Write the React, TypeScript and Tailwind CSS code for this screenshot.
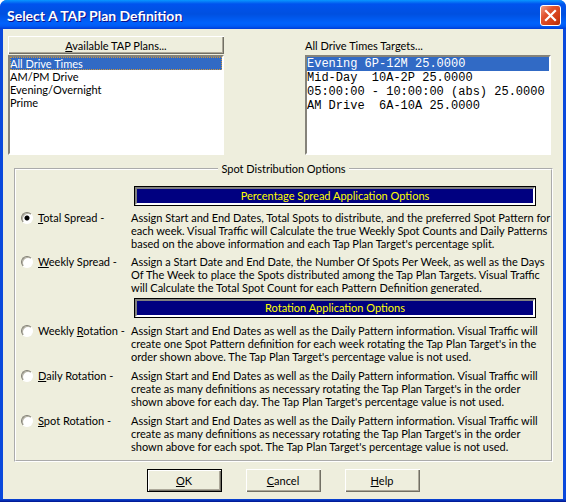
import { useState, type ReactNode } from "react";

const PLANS = ["All Drive Times", "AM/PM Drive", "Evening/Overnight", "Prime"];

const TARGETS = [
  "Evening 6P-12M 25.0000",
  "Mid-Day\u00a0 10A-2P 25.0000",
  "05:00:00 - 10:00:00 (abs) 25.0000",
  "AM Drive\u00a0 6A-10A 25.0000",
];

type Option = { id: string; before: string; hotkey: string; after: string; lines: string[] };

const SPREAD_OPTIONS: Option[] = [
  {
    id: "total-spread",
    before: "",
    hotkey: "T",
    after: "otal Spread -",
    lines: [
      "Assign Start and End Dates, Total Spots to distribute, and the preferred Spot Pattern for",
      "each week. Visual Traffic will Calculate the true Weekly Spot Counts and Daily Patterns",
      "based on the above information and each Tap Plan Target's percentage split.",
    ],
  },
  {
    id: "weekly-spread",
    before: "",
    hotkey: "W",
    after: "eekly Spread -",
    lines: [
      "Assign a Start Date and End Date, the Number Of Spots Per Week, as well as the Days",
      "Of The Week to place the Spots distributed among the Tap Plan Targets. Visual Traffic",
      "will Calculate the Total Spot Count for each Pattern Definition generated.",
    ],
  },
];

const ROTATION_OPTIONS: Option[] = [
  {
    id: "weekly-rotation",
    before: "Weekly ",
    hotkey: "R",
    after: "otation -",
    lines: [
      "Assign Start and End Dates as well as the Daily Pattern information. Visual Traffic will",
      "create one Spot Pattern definition for each week rotating the Tap Plan Target's in the",
      "order shown above. The Tap Plan Target's percentage value is not used.",
    ],
  },
  {
    id: "daily-rotation",
    before: "",
    hotkey: "D",
    after: "aily Rotation -",
    lines: [
      "Assign Start and End Dates as well as the Daily Pattern information. Visual Traffic will",
      "create as many definitions as necessary rotating the Tap Plan Target's in the order",
      "shown above for each day. The Tap Plan Target's percentage value is not used.",
    ],
  },
  {
    id: "spot-rotation",
    before: "",
    hotkey: "S",
    after: "pot Rotation -",
    lines: [
      "Assign Start and End Dates as well as the Daily Pattern information. Visual Traffic will",
      "create as many definitions as necessary rotating the Tap Plan Target's in the order",
      "shown above for each spot. The Tap Plan Target's percentage value is not used.",
    ],
  },
];

const LIST_BOX =
  "block h-[100px] w-full appearance-none overflow-hidden rounded-none border-2 border-t-[#85837a] border-l-[#85837a] border-r-white border-b-white bg-white p-0 text-black outline-none";

const LIST_ITEM =
  "block p-0 checked:bg-[linear-gradient(#316ac5,#316ac5)] checked:[-webkit-text-fill-color:#fff]";

function Banner({ children }: { children: ReactNode }) {
  return (
    <h2 className="mr-[15px] ml-[118px] border border-black">
      <span className="block border-2 border-t-[#808080] border-r-white border-b-white border-l-[#808080] bg-[#000080] text-center leading-[14px] text-[#ffff00]">
        {children}
      </span>
    </h2>
  );
}

function OptionRow({
  option,
  checked,
  onSelect,
}: {
  option: Option;
  checked: boolean;
  onSelect: (id: string) => void;
}) {
  return (
    <div className="flex items-start">
      <div className="flex w-[115px] shrink-0 items-center gap-[5px] pl-[5px]">
        <input
          id={option.id}
          type="radio"
          name="distribution"
          checked={checked}
          onChange={() => onSelect(option.id)}
          aria-describedby={`${option.id}-text`}
          className="size-3 shrink-0 appearance-none rounded-full border border-t-[#807e73] border-r-white border-b-white border-l-[#807e73] bg-white shadow-[inset_1px_1px_0_#b5b3a5] checked:bg-[radial-gradient(circle,#000_2px,transparent_3px)]"
        />
        <label htmlFor={option.id} className="whitespace-nowrap">
          {option.before}
          <u>{option.hotkey}</u>
          {option.after}
        </label>
      </div>
      <p id={`${option.id}-text`} className="whitespace-nowrap">
        {option.lines.map((line) => (
          <span key={line} className="block">
            {line}
          </span>
        ))}
      </p>
    </div>
  );
}

function PushButton({ hotkey, rest, primary }: { hotkey: string; rest: string; primary?: boolean }) {
  return (
    <button
      type="button"
      className={
        primary
          ? "h-[23px] w-[75px] border border-black shadow-[inset_1px_1px_0_#fff,inset_-1px_-1px_0_#716f64,inset_-2px_-2px_0_#aca899]"
          : "h-[23px] w-[75px] shadow-[inset_1px_1px_0_#fff,inset_-1px_-1px_0_#716f64,inset_-2px_-2px_0_#aca899]"
      }
    >
      <u>{hotkey}</u>
      {rest}
    </button>
  );
}

export default function App() {
  const [plan, setPlan] = useState(PLANS[0]);
  const [target, setTarget] = useState(TARGETS[0]);
  const [selected, setSelected] = useState("total-spread");

  return (
    <main className="w-full overflow-hidden rounded-t-[7px] bg-[#0a49dc] font-[Lato,Arial,sans-serif] text-[11px] leading-[13px] text-black">
      <header className="flex h-[29px] items-center justify-between bg-[linear-gradient(#0997ff_0px,#0053ee_4px,#0050e0_14px,#0062fc_23px,#005bf5_26px,#003dd7_29px)] pr-[5px] pl-[7px]">
        <h1 className="pt-0.5 text-[14px] leading-4 font-bold text-white [text-shadow:1px_1px_0_#0f1089]">
          Select A TAP Plan Definition
        </h1>
        <button
          type="button"
          aria-label="Close"
          className="mt-px flex size-[21px] items-center justify-center rounded-[3px] border border-white bg-[linear-gradient(135deg,#f0a088,#e1532f_35%,#d03c14_75%,#b02c08)]"
        >
          <svg viewBox="0 0 13 13" className="size-[13px]" stroke="#fff" strokeWidth="2.2" strokeLinecap="square">
            <path d="M2 2L11 11M11 2L2 11" />
          </svg>
        </button>
      </header>

      <div className="mx-[3px] bg-[#eeeedd] px-[5px] py-[7px]">
        <div className="flex justify-between pr-[7px]">
          <div className="w-[216px]">
            <button
              type="button"
              className="mb-px block h-[18px] w-full shadow-[inset_1px_1px_0_#fff,inset_-1px_-1px_0_#716f64,inset_-2px_-2px_0_#aca899]"
            >
              <u>A</u>vailable TAP Plans...
            </button>
            <select
              size={4}
              aria-label="Available TAP Plans"
              value={plan}
              onChange={(e) => setPlan(e.target.value)}
              className={LIST_BOX}
            >
              {PLANS.map((p) => (
                <option
                  key={p}
                  value={p}
                  className={`${LIST_ITEM} h-[13px] min-h-0 leading-[13px] checked:outline checked:-outline-offset-1 checked:outline-[#ce953a] checked:outline-dotted`}
                >
                  {p}
                </option>
              ))}
            </select>
          </div>
          <div className="w-[246px]">
            <label htmlFor="targets" className="block h-[19px] pt-[3px]">
              All Drive Times Targets...
            </label>
            <select
              id="targets"
              size={4}
              value={target}
              onChange={(e) => setTarget(e.target.value)}
              className={`${LIST_BOX} font-['Liberation_Mono','Courier_New',monospace] text-[12px]`}
            >
              {TARGETS.map((t) => (
                <option key={t} value={t} className={`${LIST_ITEM} h-[14px] min-h-0 leading-[14px]`}>
                  {t}
                </option>
              ))}
            </select>
          </div>
        </div>

        <fieldset className="mt-[7px] mr-[5px] ml-1.5 min-w-0 border-2 border-white [border-style:groove] pb-[7px]">
          <legend className="mx-auto px-[3px]">Spot Distribution Options</legend>
          <div className="mt-[11px] flex flex-col gap-1">
            <section className="flex flex-col gap-[5px]">
              <Banner>Percentage Spread Application Options</Banner>
              {SPREAD_OPTIONS.map((o) => (
                <OptionRow key={o.id} option={o} checked={selected === o.id} onSelect={setSelected} />
              ))}
            </section>
            <section className="flex flex-col gap-1.5">
              <Banner>Rotation Application Options</Banner>
              {ROTATION_OPTIONS.map((o) => (
                <OptionRow key={o.id} option={o} checked={selected === o.id} onSelect={setSelected} />
              ))}
            </section>
          </div>
        </fieldset>

        <div className="mt-[7px] flex justify-center gap-6">
          <PushButton hotkey="O" rest="K" primary />
          <PushButton hotkey="C" rest="ancel" />
          <PushButton hotkey="H" rest="elp" />
        </div>
      </div>
      <div className="h-[3px] bg-[linear-gradient(#0a49dc,#00138c)]" />
    </main>
  );
}
